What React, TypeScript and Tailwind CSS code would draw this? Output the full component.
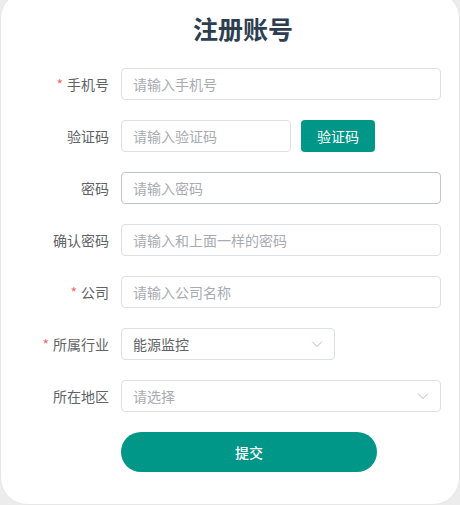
import React from "react";

const font = { fontFamily: '"Noto Sans CJK SC", "Noto Sans", sans-serif' };

function Label({ text, required }: { text: string; required?: boolean }) {
  return (
    <div className="w-[120px] shrink-0 pr-3 text-right text-sm text-[#606266]">
      {required && <span className="mr-1 text-[#f56c6c]">*</span>}
      {text}
    </div>
  );
}

function Chevron() {
  return (
    <svg width="12" height="12" viewBox="0 0 12 12" fill="none" className="shrink-0">
      <path d="M1.5 4L6 8.5L10.5 4" stroke="#b8bbc2" strokeWidth="1" strokeLinecap="round" strokeLinejoin="round" />
    </svg>
  );
}

function Input({ placeholder, width = "w-[320px]", hover }: { placeholder: string; width?: string; hover?: boolean }) {
  return (
    <div
      className={`${width} h-8 rounded border ${hover ? "border-[#c0c4cc]" : "border-[#dcdfe6]"} flex items-center px-[11px] text-sm text-[#a8abb2]`}
    >
      {placeholder}
    </div>
  );
}

export default function App() {
  return (
    <div className="w-[460px] h-[505px] overflow-hidden bg-[#ececec]" style={font}>
      <div className="mx-[1px] mt-[-8px] h-[512px] rounded-[26px] bg-white pt-[20px] shadow-[0_0_2px_rgba(0,0,0,0.08)]">
        <h1 className="pl-[26px] text-center text-[25px] leading-8 font-bold text-[#2c3e50]">注册账号</h1>
        <div className="mt-6 flex flex-col gap-5">
          <div className="flex items-center">
            <Label text="手机号" required />
            <Input placeholder="请输入手机号" />
          </div>
          <div className="flex items-center">
            <Label text="验证码" />
            <Input placeholder="请输入验证码" width="w-[170px]" />
            <button className="ml-[10px] h-8 w-[74px] rounded bg-[#009688] text-sm text-white">验证码</button>
          </div>
          <div className="flex items-center">
            <Label text="密码" />
            <Input placeholder="请输入密码" hover />
          </div>
          <div className="flex items-center">
            <Label text="确认密码" />
            <Input placeholder="请输入和上面一样的密码" />
          </div>
          <div className="flex items-center">
            <Label text="公司" required />
            <Input placeholder="请输入公司名称" />
          </div>
          <div className="flex items-center">
            <Label text="所属行业" required />
            <div className="w-[214px] h-8 rounded border border-[#dcdfe6] flex items-center justify-between pl-[11px] pr-[11px] text-sm text-[#606266]">
              <span>能源监控</span>
              <Chevron />
            </div>
          </div>
          <div className="flex items-center">
            <Label text="所在地区" />
            <div className="w-[320px] h-8 rounded border border-[#dcdfe6] flex items-center justify-between pl-[11px] pr-[11px] text-sm text-[#a8abb2]">
              <span>请选择</span>
              <Chevron />
            </div>
          </div>
          <div className="flex items-center">
            <div className="w-[120px] shrink-0" />
            <button className="h-10 w-[256px] rounded-full bg-[#009688] text-sm font-medium text-white">提交</button>
          </div>
        </div>
      </div>
    </div>
  );
}
